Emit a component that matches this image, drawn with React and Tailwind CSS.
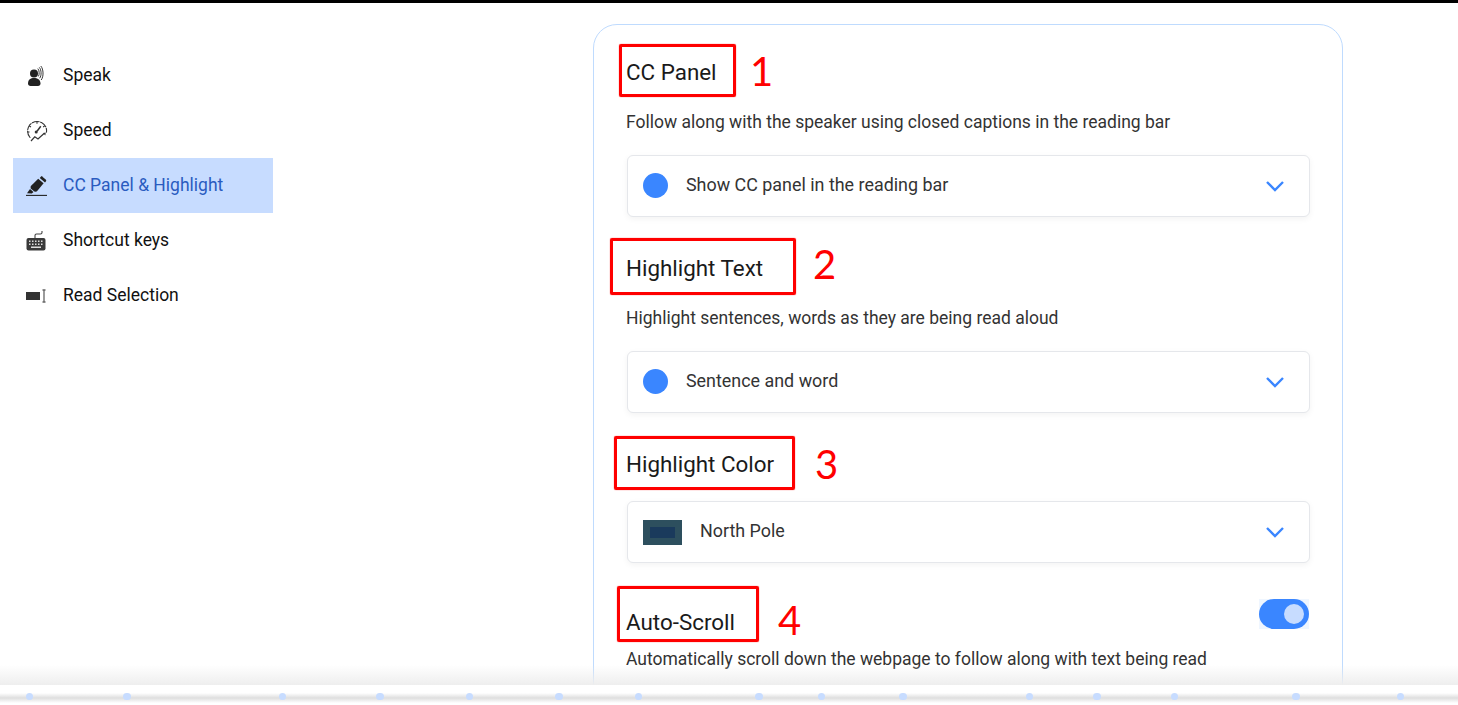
import React from "react";

const SpeakIcon = () => (
  <svg width="20" height="20" viewBox="0 0 20 20" className="text-[#222]">
    <circle cx="8" cy="7.500" r="4" fill="currentColor" />
    <path d="M2 17.500c0-3.800 2.600-5.500 6-5.500s6.500 1.700 6.500 5.500c0 1.500-1 2.500-2.500 2.500H4.500C3 20 2 19 2 17.500z" fill="currentColor" />
    <path d="M11.800 2.600c1.600 1.400 1.800 6 .6 7.800M13.300 1.400c2.200 2.400 2.400 8.200.4 10.800M14.800 0c2.800 3.200 3 10.600.4 14" fill="none" stroke="currentColor" strokeWidth="0.900" />
  </svg>
);

const SpeedIcon = () => (
  <svg width="22" height="22" viewBox="0 0 22 22" fill="none" stroke="#333" strokeWidth="1.100">
    <path d="M4 17.500C1 14 .8 9 3.500 5.200 6.200 1.600 11.500.6 15.500 2.500c3.600 1.800 5.600 5.800 5 9.600" strokeLinecap="round" strokeDasharray="7 1.500" />
    <path d="M11 1.500v2.200M3.300 6l1.700 1M1.300 12h2.200M18.600 6l-1.500 1" />
    <path d="M14.800 6.200l-3.800 5" strokeWidth="1.500" />
    <circle cx="10.200" cy="12" r="1.500" fill="#333" stroke="none" />
    <path d="M5 21l3.800-4.200 3.200 2.200 6-5.500" strokeWidth="1.200" />
    <path d="M17 13l2.800-.6-.5 3z" fill="#333" stroke="none" />
  </svg>
);

const HighlightIcon = () => (
  <svg width="21" height="20" viewBox="0 0 21 20">
    <path d="M15.800.3l3.900 3.200c.6.500.7 1.200.3 1.700l-1 1.200-5.200-4.300 1-1.300c.4-.6 1.300-.9 2-.5z" fill="#222" />
    <path d="M12.200 2.800l5.400 4.500-6.600 7.900c-.3.300-1.800.5-2.600.4l-3.700-3.100c-.2-.8-.1-2.200.2-2.600z" fill="#222" />
    <path d="M4 13l3.500 2.900-1.700 1.500-4.800-.2z" fill="#222" />
    <path d="M0 19.400h21" stroke="#222" strokeWidth="1.100" />
  </svg>
);

const KeyboardIcon = () => (
  <svg width="20" height="21" viewBox="0 0 20 21">
    <path d="M9 8V5.500c0-1 .5-1.500 1.500-1.500h4c1 0 1.500-.5 1.500-1.500V1" fill="none" stroke="#444" strokeWidth="1.100" />
    <rect x="0.500" y="8" width="19" height="12.500" rx="2" fill="#3a3a3a" />
    <g fill="#ddd">
      <rect x="3" y="10.500" width="1.500" height="1.500" />
      <rect x="6" y="10.500" width="1.500" height="1.500" />
      <rect x="9" y="10.500" width="1.500" height="1.500" />
      <rect x="12" y="10.500" width="1.500" height="1.500" />
      <rect x="15" y="10.500" width="1.500" height="1.500" />
      <rect x="3" y="13.500" width="1.500" height="1.500" />
      <rect x="6" y="13.500" width="1.500" height="1.500" />
      <rect x="9" y="13.500" width="1.500" height="1.500" />
      <rect x="12" y="13.500" width="1.500" height="1.500" />
      <rect x="15" y="13.500" width="1.500" height="1.500" />
      <rect x="5" y="16.500" width="10" height="1.500" />
    </g>
  </svg>
);

const ReadIcon = () => (
  <svg width="20" height="14" viewBox="0 0 20 14">
    <rect x="0" y="3" width="14" height="8" fill="#333" />
    <path d="M16.500 1h3M18 1v12M16.500 13h3" fill="none" stroke="#666" strokeWidth="1.300" />
  </svg>
);

const Chevron = () => (
  <svg width="20" height="12" viewBox="0 0 20 12" fill="none" stroke="#3a86ff" strokeWidth="2.400" className="mr-[24px]">
    <path d="M2 2l8 8 8-8" />
  </svg>
);

const menuItems = [
  { label: "Speak", icon: <SpeakIcon /> },
  { label: "Speed", icon: <SpeedIcon /> },
  { label: "CC Panel & Highlight", icon: <HighlightIcon />, active: true },
  { label: "Shortcut keys", icon: <KeyboardIcon /> },
  { label: "Read Selection", icon: <ReadIcon /> },
];

const dots = [29, 127, 282, 380, 469, 559, 638, 759, 821, 903, 1029, 1097, 1174, 1296, 1400];

const Sidebar = () => (
  <div className="w-[260px] ml-[13px] mt-[45px] shrink-0">
    {menuItems.map((item) => (
      <div
        key={item.label}
        className={
          item.active
            ? "h-[55px] flex items-center bg-[#c7dcff] text-[#2a5bc0]"
            : "h-[55px] flex items-center text-[#111]"
        }
      >
        <div className="w-[50px] pl-[13px] flex items-center shrink-0">{item.icon}</div>
        <span className="text-[17.500px]">{item.label}</span>
      </div>
    ))}
  </div>
);

const Select = ({ children, label, className }) => (
  <div className={`ml-px h-[62px] flex items-center justify-between rounded-md border border-[#e5e7eb] bg-white shadow-[0_2px_6px_rgba(0,0,0,0.05)] ${className}`}>
    <div className="flex items-center pl-[15px] text-[17.900px] text-[#333]">
      {children}
      <span className="pb-[2px]">{label}</span>
    </div>
    <Chevron />
  </div>
);

const Bullet = () => <div className="w-[25px] h-[25px] rounded-full bg-[#3a86ff] mr-[18px]" />;

const Mark = ({ boxClass, digitClass, digit }) => (
  <>
    <div className={`absolute border-[3px] border-[#ff0000] rounded-[2px] shadow-[0_0_1px_#ff0000] ${boxClass}`} />
    <span className={`absolute font-['Lato',sans-serif] text-[40px] leading-[40px] text-[#ff0000] ${digitClass}`}>{digit}</span>
  </>
);

const Settings = () => (
  <div className="w-[750px] ml-[320px] mt-[21px] shrink-0 self-start rounded-[24px] border border-[#bfdbfe] pl-[32px] pr-[32px] pt-[31px] h-[720px]">
    <div className="relative text-[22.400px] leading-[32px] text-[#1a1a1a]">
      CC Panel
      <Mark boxClass="-left-[7px] -top-[12px] w-[117px] h-[53px]" digitClass="left-[124px] -top-[5px]" digit="1" />
    </div>
    <p className="mt-[22px] text-[17.500px] leading-[24px] text-[#333]">
      Follow along with the speaker using closed captions in the reading bar
    </p>
    <Select label="Show CC panel in the reading bar" className="mt-[21px]">
      <Bullet />
    </Select>

    <div className="relative mt-[35px] text-[22.400px] leading-[32px] text-[#1a1a1a]">
      Highlight Text
      <Mark boxClass="-left-[16px] -top-[14px] w-[186px] h-[57px]" digitClass="left-[187px] -top-[8px]" digit="2" />
    </div>
    <p className="mt-[22px] text-[17.500px] leading-[24px] text-[#333]">
      Highlight sentences, words as they are being read aloud
    </p>
    <Select label="Sentence and word" className="mt-[21px]">
      <Bullet />
    </Select>

    <div className="relative mt-[35px] text-[22.400px] leading-[32px] text-[#1a1a1a]">
      Highlight Color
      <Mark boxClass="-left-[12px] -top-[12px] w-[181px] h-[54px]" digitClass="left-[189px] -top-[4px]" digit="3" />
    </div>
    <Select label="North Pole" className="mt-[21px]">
      <div className="w-[39px] h-[25px] mt-px bg-[#2d4f5e] mr-[18px] flex items-center justify-center">
        <div className="w-[25px] h-[11px] bg-[#1a3a5c]" />
      </div>
    </Select>

    <div className="mt-[36px] flex justify-between">
      <div className="relative mt-[7px] text-[22.400px] leading-[32px] text-[#1a1a1a]">
        Auto-Scroll
        <Mark boxClass="-left-[9px] -top-[20px] w-[142px] h-[56px]" digitClass="left-[152px] -top-[6px]" digit="4" />
      </div>
      <div className="w-[50px] h-[30px] mr-px bg-[#eff6ff]">
        <div className="w-full h-full rounded-full bg-[#3a86ff] flex items-center justify-end pr-[5px]">
          <div className="w-[20px] h-[20px] rounded-full bg-[#c7dcff]" />
        </div>
      </div>
    </div>
    <p className="mt-[9px] text-[17.500px] leading-[24px] text-[#333]">
      Automatically scroll down the webpage to follow along with text being read
    </p>
  </div>
);

const App = () => {
  return (
    <div className="relative h-[705px] overflow-hidden bg-white font-['Roboto',sans-serif]">
      <div className="h-[3px] bg-black" />
      <div className="flex h-[682px] overflow-hidden">
        <Sidebar />
        <Settings />
      </div>
      {/* fade over the bottom of the page */}
      <div className="absolute left-0 right-0 top-[665px] h-[20px] bg-linear-to-b from-transparent to-[#eeeeee]" />
      <div className="relative h-[20px] bg-white pt-[8px]">
        <div className="h-[10px] bg-linear-to-b from-white via-[#dedede] to-white" />
        {dots.map((x, i) => (
          <div
            key={x}
            className={i % 2 ? "absolute top-[8px] w-[8px] h-[7px] -ml-[4px] rounded-full bg-[#c7dcff]" : "absolute top-[8px] w-[7px] h-[7px] -ml-[3px] rounded-full bg-[#c7dcff]"}
            style={{ left: x }}
          />
        ))}
      </div>
    </div>
  );
};

export default App;
